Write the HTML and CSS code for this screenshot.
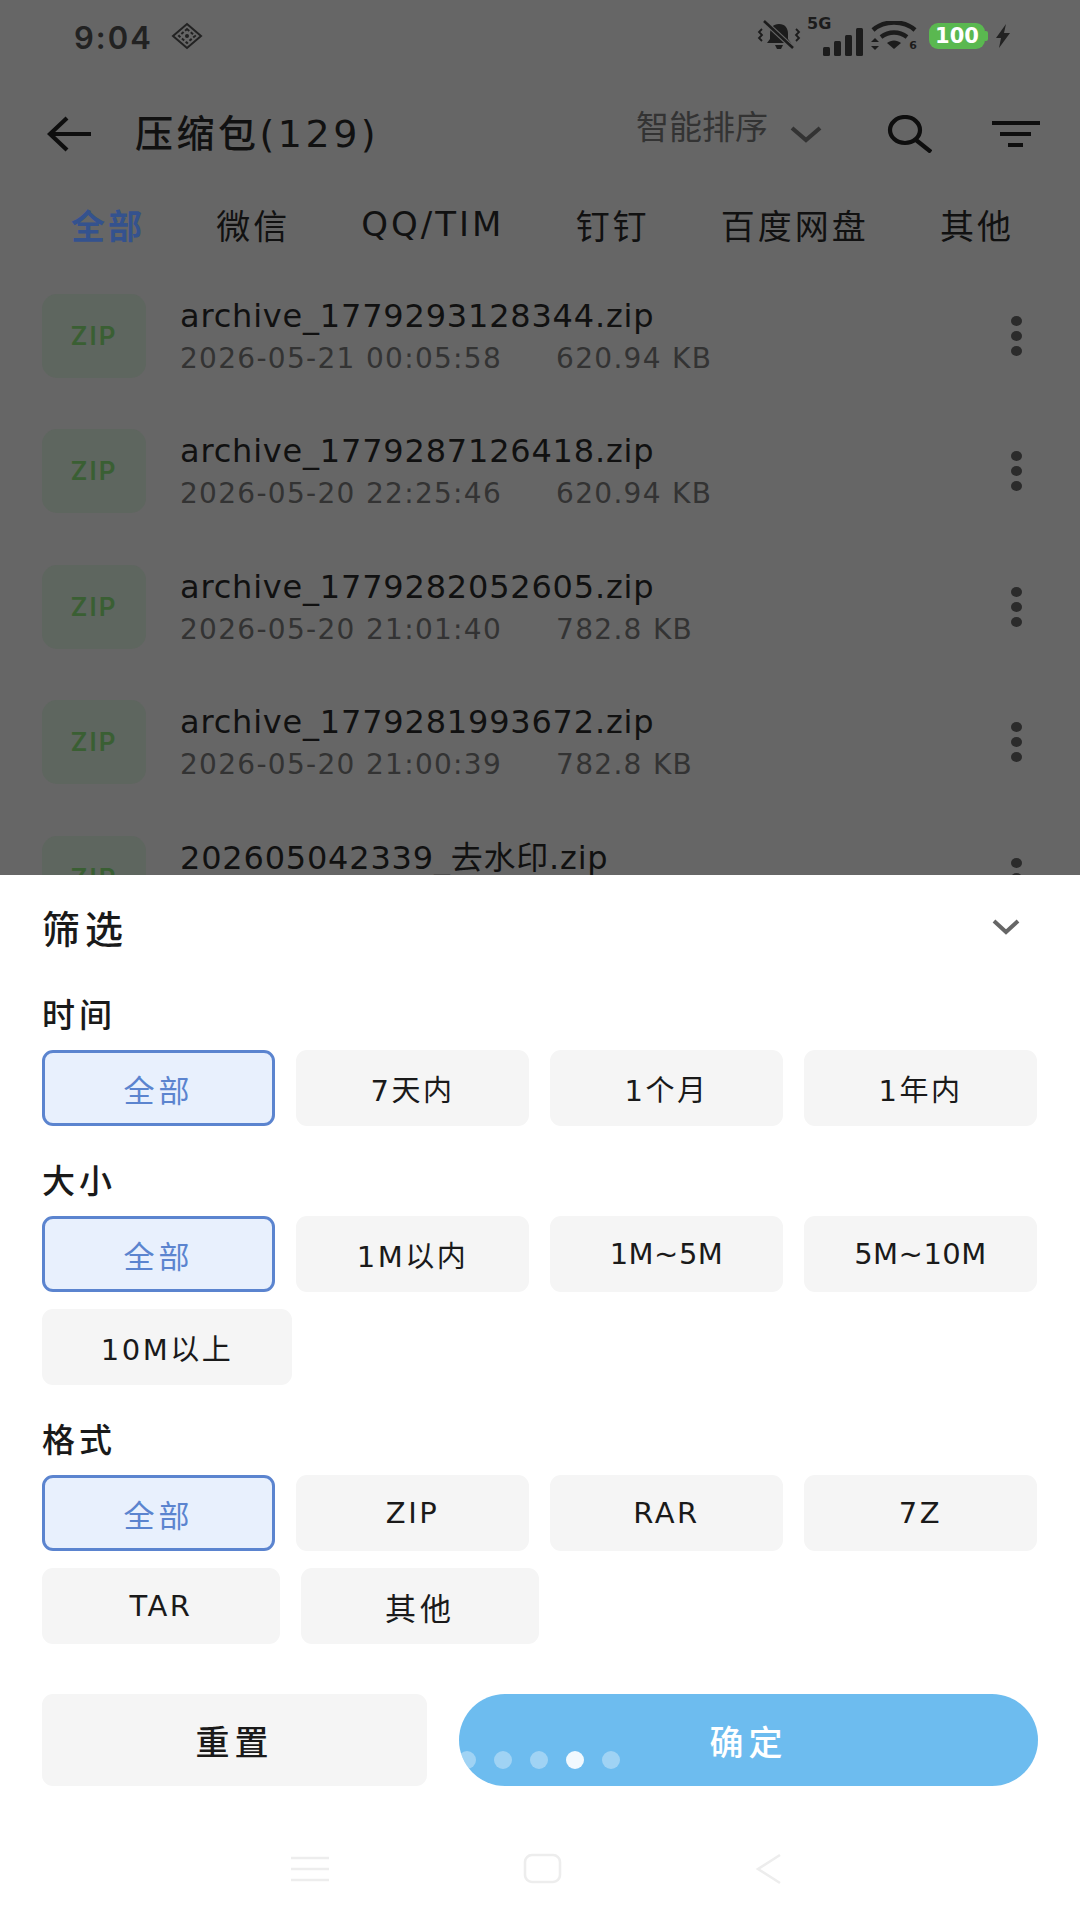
FILE: index.html
```html
<!DOCTYPE html>
<html lang="zh">
<head>
<meta charset="utf-8">
<title>压缩包</title>
<link rel="stylesheet" href="styles.css">
</head>
<body>
<div class="app">
  <div class="status">
    <div class="status-left">
      <span class="time">9:04</span>
      <svg class="ic-diamond" viewBox="0 0 32 28" width="32" height="28"><path d="M16 2 30 14 16 26 2 14Z" fill="none" stroke="#222" stroke-width="2"/><path d="M16 7 24 14 16 21 8 14Z" fill="none" stroke="#222" stroke-width="2" stroke-dasharray="3 2"/><circle cx="16" cy="14" r="2" fill="#222"/></svg>
    </div>
    <div class="status-right">
      <svg viewBox="0 0 44 32" width="44" height="32"><path d="M22 4c-6 0-9 4-9 10v5l-3 4h24l-3-4v-5c0-6-3-10-9-10Z" fill="#1c1c1c"/><path d="M18 25h8l-2 4h-4Z" fill="#1c1c1c"/><path d="M8 2 36 28" stroke="#666" stroke-width="5"/><path d="M7 1 36 28" stroke="#1c1c1c" stroke-width="2.6"/><path d="M5 9 2 12l3 3-3 3 3 3M39 9l3 3-3 3 3 3-3 3" fill="none" stroke="#1c1c1c" stroke-width="1.8"/></svg>
      <div class="net">
        <span class="net-label">5G</span>
        <svg viewBox="0 0 42 28" width="42" height="28"><rect x="1" y="19" width="7" height="9" rx="1.5" fill="#1c1c1c"/><rect x="12" y="13" width="7" height="15" rx="1.5" fill="#1c1c1c"/><rect x="23" y="7" width="7" height="21" rx="1.5" fill="#1c1c1c"/><rect x="34" y="0" width="7" height="28" rx="1.5" fill="#1c1c1c"/></svg>
      </div>
      <div class="wifi">
        <svg viewBox="0 0 46 30" width="46" height="30"><path d="M2 9C13-1 33-1 44 9" fill="none" stroke="#1c1c1c" stroke-width="4.4"/><path d="M10 16c8-6 18-6 26 0" fill="none" stroke="#1c1c1c" stroke-width="4.4"/><path d="M16 22c4-3.500 10-3.500 14 0l-7 6Z" fill="#1c1c1c"/><path d="M4 17 8 21H0ZM4 29 8 25H0Z" fill="#1c1c1c"/></svg>
        <span class="wifi-num">6</span>
      </div>
      <div class="battery"><span class="battery-body">100</span><span class="battery-cap"></span></div>
      <svg viewBox="0 0 16 24" width="16" height="24"><path d="M11 0 1 14h5L4 24l11-15H9Z" fill="#222"/></svg>
    </div>
  </div>

  <div class="toolbar">
    <svg class="back" viewBox="0 0 44 36" width="44" height="36"><path d="M20 2 3 18l17 16M3 18h41" fill="none" stroke="#0e0e0e" stroke-width="4.200"/></svg>
    <h1 class="title">压缩包(129)</h1>
    <div class="sort">
      <span>智能排序</span>
      <svg viewBox="0 0 32 18" width="32" height="18"><path d="M2 3 16 15 30 3" fill="none" stroke="#333" stroke-width="4.200"/></svg>
    </div>
    <svg class="search" viewBox="0 0 46 38" width="46" height="38"><ellipse cx="19" cy="15" rx="15" ry="13" fill="none" stroke="#0e0e0e" stroke-width="4.200"/><path d="M30 25 45 37" stroke="#0e0e0e" stroke-width="4.200"/></svg>
    <svg class="filter" viewBox="0 0 48 26" width="48" height="26"><path d="M0 2h48M8 13h31M16 24h15" fill="none" stroke="#0e0e0e" stroke-width="4"/></svg>
  </div>

  <nav class="tabs">
    <span class="tab tab-on">全部</span>
    <span class="tab">微信</span>
    <span class="tab">QQ/TIM</span>
    <span class="tab">钉钉</span>
    <span class="tab">百度网盘</span>
    <span class="tab">其他</span>
  </nav>

  <ul class="files">
    <li class="file">
      <div class="tile">ZIP</div>
      <div class="file-info">
        <div class="file-name">archive_1779293128344.zip</div>
        <div class="file-meta"><span>2026-05-21 00:05:58</span><span>620.94 KB</span></div>
      </div>
      <div class="more"><i></i><i></i><i></i></div>
    </li>
    <li class="file">
      <div class="tile">ZIP</div>
      <div class="file-info">
        <div class="file-name">archive_1779287126418.zip</div>
        <div class="file-meta"><span>2026-05-20 22:25:46</span><span>620.94 KB</span></div>
      </div>
      <div class="more"><i></i><i></i><i></i></div>
    </li>
    <li class="file">
      <div class="tile">ZIP</div>
      <div class="file-info">
        <div class="file-name">archive_1779282052605.zip</div>
        <div class="file-meta"><span>2026-05-20 21:01:40</span><span>782.8 KB</span></div>
      </div>
      <div class="more"><i></i><i></i><i></i></div>
    </li>
    <li class="file">
      <div class="tile">ZIP</div>
      <div class="file-info">
        <div class="file-name">archive_1779281993672.zip</div>
        <div class="file-meta"><span>2026-05-20 21:00:39</span><span>782.8 KB</span></div>
      </div>
      <div class="more"><i></i><i></i><i></i></div>
    </li>
    <li class="file">
      <div class="tile">ZIP</div>
      <div class="file-info">
        <div class="file-name">202605042339_去水印.zip</div>
      </div>
      <div class="more"><i></i><i></i><i></i></div>
    </li>
  </ul>

  <section class="sheet">
    <header class="sheet-head">
      <h2 class="sheet-title">筛选</h2>
      <svg viewBox="0 0 28 18" width="28" height="18"><path d="M2 3 14 14 26 3" fill="none" stroke="#666" stroke-width="4"/></svg>
    </header>

    <h3 class="group-label group-first">时间</h3>
    <div class="chips">
      <button class="chip chip-on">全部</button>
      <button class="chip">7天内</button>
      <button class="chip">1个月</button>
      <button class="chip">1年内</button>
    </div>

    <h3 class="group-label">大小</h3>
    <div class="chips">
      <button class="chip chip-on">全部</button>
      <button class="chip">1M以内</button>
      <button class="chip chip-tilde">1M~5M</button>
      <button class="chip chip-tilde">5M~10M</button>
      <button class="chip chip-wide">10M以上</button>
    </div>

    <h3 class="group-label">格式</h3>
    <div class="chips">
      <button class="chip chip-on">全部</button>
      <button class="chip">ZIP</button>
      <button class="chip">RAR</button>
      <button class="chip">7Z</button>
      <button class="chip chip-mid">TAR</button>
      <button class="chip chip-mid chip-cjk">其他</button>
    </div>

    <div class="actions">
      <button class="btn-reset">重置</button>
      <button class="btn-ok">确定
        <span class="dots"><i></i><i></i><i></i><i class="dot-on"></i><i></i></span>
      </button>
    </div>

    <div class="navbar">
      <svg viewBox="0 0 40 28" width="40" height="28"><path d="M1 3h38M1 14h38M1 25h38" fill="none" stroke="#ededed" stroke-width="2.600"/></svg>
      <svg viewBox="0 0 40 32" width="40" height="32"><rect x="2" y="2" width="35" height="27" rx="7" fill="none" stroke="#ededed" stroke-width="2.600"/></svg>
      <svg viewBox="0 0 28 32" width="28" height="32"><path d="M25 2 3 16l22 14" fill="none" stroke="#ededed" stroke-width="2.600"/></svg>
    </div>
  </section>
</div>
</body>
</html>
```
FILE: styles.css
```css
* { box-sizing: border-box; }
html, body { margin: 0; padding: 0; }
body {
  font-family: "DejaVu Sans", "Noto Sans CJK SC", sans-serif;
  background: #666;
}
button { font: inherit; border: 0; padding: 0; }
h1, h2, h3, ul { margin: 0; padding: 0; font-weight: 400; }
li { list-style: none; }

.app {
  position: relative;
  width: 1080px;
  height: 1920px;
  overflow: hidden;
  background: #666;
  color: #111;
}

/* status bar */
.status {
  height: 72px;
  padding: 0 69px 0 74px;
  display: flex;
  align-items: center;
  justify-content: space-between;
}
.status-left { display: flex; align-items: center; gap: 18px; }
.time { font-family: "Inter", sans-serif; font-size: 31px; font-weight: 600; letter-spacing: 2px; color: #222; padding-top: 2px; }
.status-right { display: flex; align-items: center; gap: 7px; }
.net { position: relative; width: 56px; height: 40px; display: flex; align-items: flex-end; justify-content: flex-end; }
.net-label { position: absolute; left: -1px; top: -2px; font-size: 16px; font-weight: 700; color: #1c1c1c; }
.wifi { position: relative; width: 46px; height: 30px; }
.wifi-num { position: absolute; right: 0; bottom: -1px; font-size: 11px; line-height: 13px; font-weight: 700; color: #1c1c1c; }
.battery { display: flex; align-items: center; margin-left: 5px; }
.battery-body {
  width: 56px;
  height: 26px;
  border-radius: 9px;
  background: #5ab850;
  color: #fff;
  font-size: 21px;
  font-weight: 700;
  line-height: 26px;
  text-align: center;
}
.battery-cap { width: 3px; height: 10px; background: #5ab850; border-radius: 0 2px 2px 0; }

/* toolbar */
.toolbar {
  height: 100px;
  padding: 0 40px 0 47px;
  margin-top: 12px;
  display: flex;
  align-items: center;
}
.title { margin-left: 44px; padding-bottom: 8px; font-size: 38px; font-weight: 500; letter-spacing: 3.500px; color: #111; flex: 1; }
.sort { display: flex; align-items: center; gap: 22px; color: #333; font-size: 33px; margin-right: 64px; }
.sort span { padding-bottom: 19px; }
.filter { margin-left: 60px; }

/* tabs */
.tabs {
  margin-top: 2px;
  height: 76px;
  padding: 0 66px 0 71px;
  display: flex;
  align-items: center;
  justify-content: space-between;
  font-size: 34px;
  letter-spacing: 3px;
  color: #111;
}
.tab-on { color: #34528e; font-weight: 700; }

/* list */
.files { margin-top: 32px; }
.file {
  height: 135.400px;
  padding: 0 42px;
  display: flex;
  align-items: flex-start;
}
.tile {
  width: 104px;
  height: 84px;
  border-radius: 15px;
  background: #5e665f;
  color: #3a5f33;
  font-family: "Inter", sans-serif;
  font-size: 26px;
  font-weight: 600;
  letter-spacing: 2px;
  line-height: 84px;
  text-align: center;
}
.file-info { flex: 1; margin-left: 34px; }
.file-name { font-size: 32px; line-height: 44px; letter-spacing: 0.800px; color: #111; }
.file-meta { display: flex; gap: 54px; margin-top: 3px; font-size: 28px; line-height: 36px; letter-spacing: 1.300px; color: #333; }
.more { display: flex; flex-direction: column; align-items: center; gap: 5px; width: 12px; margin: 22px 16px 0 0; }
.more i { width: 11px; height: 10px; border-radius: 50%; background: #2b2b2b; }

/* sheet */
.sheet {
  position: absolute;
  left: 0;
  right: 0;
  top: 875px;
  bottom: 0;
  background: #fff;
  padding: 0 42px;
}
.sheet-head {
  height: 103px;
  display: flex;
  align-items: center;
  justify-content: space-between;
  padding-right: 18px;
}
.sheet-title { font-size: 38px; font-weight: 500; color: #1a1a1a; letter-spacing: 5px; }
.group-label { font-size: 33px; font-weight: 500; color: #1a1a1a; line-height: 44px; margin: 34px 0 12px; letter-spacing: 4px; }
.group-first { margin-top: 16px; }

.chips { display: flex; flex-wrap: wrap; gap: 17px 21px; }
.chip {
  flex: 0 0 233px;
  height: 76px;
  border-radius: 11px;
  background: #f5f5f5;
  color: #1a1a1a;
  font-size: 29px;
  letter-spacing: 2.500px;
}
.chip-wide { flex-basis: 250px; }
.chip-mid { flex-basis: 238px; }
.chip-tilde { letter-spacing: 0.500px; }
.chip-cjk { font-size: 31px; letter-spacing: 4px; }
.chip-on {
  background: #e8f0fd;
  border: 3px solid #5b84cf;
  color: #5b84cf;
  font-size: 31px;
  letter-spacing: 4px;
}

.actions { display: flex; gap: 32px; margin-top: 50px; }
.btn-reset {
  width: 385px;
  height: 92px;
  border-radius: 11px;
  background: #f5f5f5;
  color: #1a1a1a;
  font-size: 34px;
  font-weight: 500;
  letter-spacing: 5px;
}
.btn-ok {
  position: relative;
  overflow: hidden;
  width: 579px;
  height: 92px;
  border-radius: 46px;
  background: #6dbcef;
  color: #fff;
  font-size: 34px;
  font-weight: 500;
  letter-spacing: 5px;
}
.dots {
  position: absolute;
  left: 0;
  top: 57px;
  display: flex;
  gap: 18px;
  margin-left: -1px;
}
.dots i { width: 18px; height: 18px; border-radius: 50%; background: rgba(255, 255, 255, .35); }
.dots .dot-on { background: rgba(255, 255, 255, .9); }

.navbar {
  margin: 67px 0 0;
  padding: 0 255px 0 248px;
  display: flex;
  align-items: center;
  justify-content: space-between;
}
```
